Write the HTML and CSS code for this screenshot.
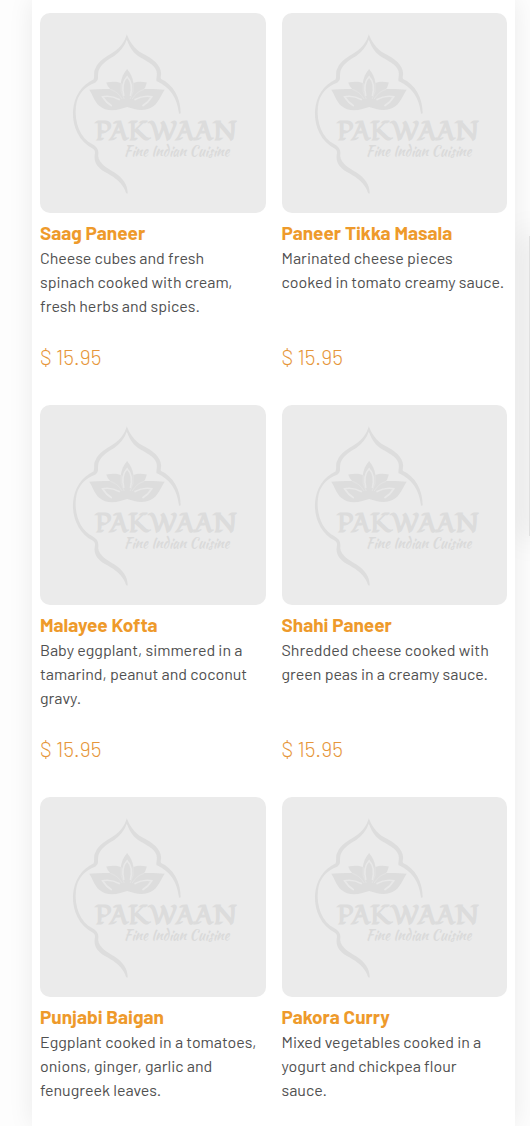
FILE: index.html
```html
<!DOCTYPE html>
<html lang="en">
<head>
<meta charset="utf-8">
<meta name="viewport" content="width=device-width, initial-scale=1">
<title>Pakwaan Menu</title>
<link rel="stylesheet" href="styles.css">
</head>
<body>
<svg class="sprite" aria-hidden="true">
  <symbol id="logo" viewBox="-60 -21 678 600">
    <g class="logo-fill">
      <path d="M201 42C209 62 222 86 247 99C278 115 302 132 304 158C305 166 301 171 304 177C340 193 363 233 363 280L358 281C352 232 331 202 290 183C290 169 293 164 290 153C284 131 254 121 234 107C216 94 206 73 201 58C194 79 181 95 162 108C137 122 118 137 115 158C113 171 118 178 107 187C74 199 52 223 48 260C43 307 60 354 99 374C113 383 117 391 115 408C117 430 142 445 163 457C190 475 203 493 204 521L199 520C188 488 166 475 145 462C117 447 104 433 104 412C104 401 110 394 98 386C58 365 38 322 39 277C41 227 67 194 101 178C105 168 100 157 106 146C116 119 140 110 160 96C183 82 194 65 201 42Z"/>
      <path d="M202 147C212 160 219 173 221 189C233 184 246 185 261 187C259 195 257 201 253 207C276 206 293 207 315 209C304 225 297 246 282 258C266 271 241 273 223 267L202 261L181 267C158 274 133 271 119 258C104 246 99 225 88 209C108 207 129 206 151 207C145 200 142 195 139 187C157 185 169 184 183 189C185 173 191 160 202 147Z"/>
    </g>
    <g class="lotus-line">
      <path d="M192 228C186 202 191 181 202 170C213 181 218 202 212 228"/>
      <path class="faint" d="M184 189Q180 216 193 237M220 189Q224 216 211 237M151 208Q172 213 187 237M253 208Q232 213 217 237"/>
      <path d="M156 258C143 250 134 240 128 230C147 226 163 230 180 239M248 258C261 250 270 240 276 230C257 226 241 230 224 239"/>
    </g>
  </symbol>
</svg>
<main class="panel">
  <section class="menu">
    <article class="dish">
      <svg class="photo" viewBox="0 0 226 200"><use href="#logo" width="226" height="200"/><text class="logo-name" x="55" y="127">PAKWAAN</text><text class="logo-tag" x="84" y="143">Fine Indian Cuisine</text></svg>
      <h2 class="name">Saag Paneer</h2>
      <p class="text">Cheese cubes and fresh<br>spinach cooked with cream,<br>fresh herbs and spices.</p>
      <p class="price">$ 15.95</p>
    </article>
    <article class="dish">
      <svg class="photo" viewBox="0 0 226 200"><use href="#logo" width="226" height="200"/><text class="logo-name" x="55" y="127">PAKWAAN</text><text class="logo-tag" x="84" y="143">Fine Indian Cuisine</text></svg>
      <h2 class="name">Paneer Tikka Masala</h2>
      <p class="text">Marinated cheese pieces<br>cooked in tomato creamy sauce.</p>
      <p class="price">$ 15.95</p>
    </article>
    <article class="dish">
      <svg class="photo" viewBox="0 0 226 200"><use href="#logo" width="226" height="200"/><text class="logo-name" x="55" y="127">PAKWAAN</text><text class="logo-tag" x="84" y="143">Fine Indian Cuisine</text></svg>
      <h2 class="name">Malayee Kofta</h2>
      <p class="text">Baby eggplant, simmered in a tamarind, peanut and coconut gravy.</p>
      <p class="price">$ 15.95</p>
    </article>
    <article class="dish">
      <svg class="photo" viewBox="0 0 226 200"><use href="#logo" width="226" height="200"/><text class="logo-name" x="55" y="127">PAKWAAN</text><text class="logo-tag" x="84" y="143">Fine Indian Cuisine</text></svg>
      <h2 class="name">Shahi Paneer</h2>
      <p class="text">Shredded cheese cooked with green peas in a creamy sauce.</p>
      <p class="price">$ 15.95</p>
    </article>
    <article class="dish">
      <svg class="photo" viewBox="0 0 226 200"><use href="#logo" width="226" height="200"/><text class="logo-name" x="55" y="127">PAKWAAN</text><text class="logo-tag" x="84" y="143">Fine Indian Cuisine</text></svg>
      <h2 class="name">Punjabi Baigan</h2>
      <p class="text">Eggplant cooked in a tomatoes, onions, ginger, garlic and fenugreek leaves.</p>
    </article>
    <article class="dish">
      <svg class="photo" viewBox="0 0 226 200"><use href="#logo" width="226" height="200"/><text class="logo-name" x="55" y="127">PAKWAAN</text><text class="logo-tag" x="84" y="143">Fine Indian Cuisine</text></svg>
      <h2 class="name">Pakora Curry</h2>
      <p class="text">Mixed vegetables cooked in a<br>yogurt and chickpea flour<br>sauce.</p>
    </article>
  </section>
</main>
<div class="drawer"></div>
</body>
</html>
```

FILE: styles.css
```css
* { box-sizing: border-box; }
body {
  margin: 0;
  min-height: 100vh;
  display: flex;
  overflow: hidden;
  background: #fdfdfd;
  font-family: Barlow, Roboto, sans-serif;
  color: #505050;
}
.sprite { position: absolute; width: 0; height: 0; }
.panel {
  position: relative;
  z-index: 1;
  flex: 1;
  margin: 0 15px 0 32px;
  padding: 13px 8px 0;
  background: #fff;
  box-shadow: 0 0 24px rgba(0, 0, 0, 0.08);
}
.menu {
  display: grid;
  grid-template-columns: 1fr 1fr;
  column-gap: 16px;
  row-gap: 32px;
}
.dish { display: flex; flex-direction: column; }
.photo {
  width: 100%;
  height: 200px;
  border-radius: 10px;
  background: #ebebeb;
}
.name {
  margin: 8px 0 0;
  font-size: 19px;
  line-height: 24px;
  font-weight: 700;
  color: #ee9a2b;
}
.text {
  margin: 1px 0 0;
  min-height: 72px;
  font-size: 16px;
  line-height: 24px;
}
.price {
  margin: 23px 0 0;
  font-size: 21px;
  line-height: 32px;
  font-weight: 300;
  color: #e6963a;
}
.logo-fill { fill: #dddddd; }
.lotus-line { fill: none; stroke: #e8e8e8; stroke-width: 5; }
.faint { stroke: #e3e3e3; stroke-width: 3; }
.logo-name {
  font: 400 27px Fondamento, Lato, sans-serif;
  fill: #dcdcdc;
  stroke: #dcdcdc;
  stroke-width: 1px;
}
.logo-tag { font: 14px "Kaushan Script", "Liberation Serif", serif; fill: #dadada; }
.drawer {
  position: absolute;
  top: 236px;
  right: 0;
  width: 1px;
  height: 300px;
  background: #e2e2e2;
  box-shadow: 0 0 30px 4px rgba(0, 0, 0, 0.18);
}
```
